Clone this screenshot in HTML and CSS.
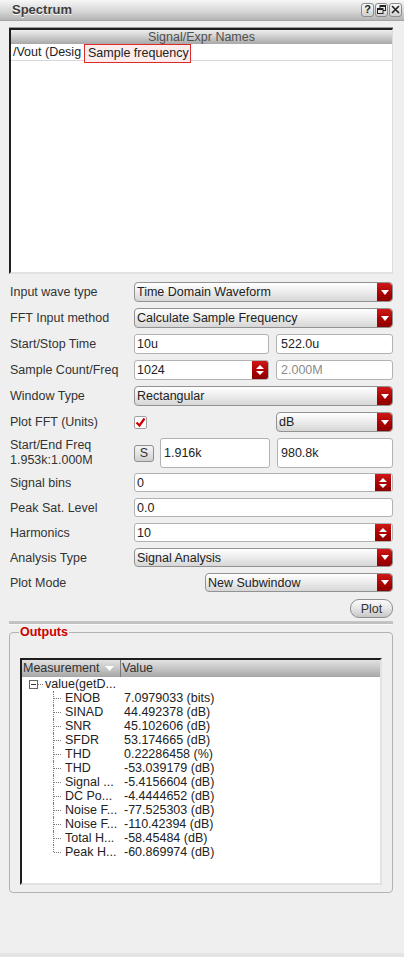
FILE: index.html
```html
<!DOCTYPE html>
<html>
<head>
<meta charset="utf-8">
<link rel="stylesheet" href="styles.css">
</head>
<body>
<div class="window">
  <div class="titlebar">
    <span class="title">Spectrum</span>
    <div class="tbtns">
      <span class="tbtn q">?</span>
      <span class="tbtn"><svg width="9" height="9" viewBox="0 0 9 9"><rect x="3" y="0.5" width="5.5" height="5" fill="none" stroke="#222" stroke-width="1"/><rect x="3" y="0.5" width="5.5" height="1.5" fill="#222"/><rect x="0.5" y="3.5" width="5.5" height="5" fill="#e8e8e8" stroke="#222" stroke-width="1"/><rect x="0.5" y="3.5" width="5.5" height="1.5" fill="#222"/></svg></span>
      <span class="tbtn"><svg width="9" height="9" viewBox="0 0 9 9"><path d="M1 1 L8 8 M8 1 L1 8" stroke="#222" stroke-width="1.6"/></svg></span>
    </div>
  </div>

  <div class="siglist">
    <div class="sighead">Signal/Expr Names</div>
    <div class="sigrow"><span class="sigtext">/Vout (Desig</span></div>
    <div class="tooltip">Sample frequency</div>
  </div>

  <div class="form">
    <div class="row">
      <span class="label">Input wave type</span>
      <div class="combo"><span>Time Domain Waveform</span><span class="arrow"><svg width="8" height="5" viewBox="0 0 8 5"><path d="M0 0 H8 L4 5 Z" fill="#fff"/></svg></span></div>
    </div>
    <div class="row">
      <span class="label">FFT Input method</span>
      <div class="combo"><span>Calculate Sample Frequency</span><span class="arrow"><svg width="8" height="5" viewBox="0 0 8 5"><path d="M0 0 H8 L4 5 Z" fill="#fff"/></svg></span></div>
    </div>
    <div class="row">
      <span class="label">Start/Stop Time</span>
      <div class="pair">
        <div class="field">10u</div>
        <div class="field">522.0u</div>
      </div>
    </div>
    <div class="row">
      <span class="label">Sample Count/Freq</span>
      <div class="pair">
        <div class="field spin"><span>1024</span><span class="spinbtn"><svg width="8" height="12" viewBox="0 0 8 12"><path d="M0 5 H8 L4 1 Z M0 7 H8 L4 11 Z" fill="#fff"/></svg></span></div>
        <div class="field disabled">2.000M</div>
      </div>
    </div>
    <div class="row">
      <span class="label">Window Type</span>
      <div class="combo"><span>Rectangular</span><span class="arrow"><svg width="8" height="5" viewBox="0 0 8 5"><path d="M0 0 H8 L4 5 Z" fill="#fff"/></svg></span></div>
    </div>
    <div class="row">
      <span class="label">Plot FFT (Units)</span>
      <div class="pair">
        <div class="checkcell"><span class="check"><svg width="11" height="11" viewBox="0 0 11 11"><path d="M1.5 5.5 L4.5 8.5 L9.5 1.5" fill="none" stroke="#d00000" stroke-width="2.2"/></svg></span></div>
        <div class="combo"><span>dB</span><span class="arrow"><svg width="8" height="5" viewBox="0 0 8 5"><path d="M0 0 H8 L4 5 Z" fill="#fff"/></svg></span></div>
      </div>
    </div>
    <div class="row tall">
      <span class="label two">Start/End Freq<br>1.953k:1.000M</span>
      <div class="freq">
        <span class="sbtn">S</span>
        <div class="field">1.916k</div>
        <div class="field">980.8k</div>
      </div>
    </div>
    <div class="row short">
      <span class="label">Signal bins</span>
      <div class="field spin"><span>0</span><span class="spinbtn"><svg width="8" height="12" viewBox="0 0 8 12"><path d="M0 5 H8 L4 1 Z M0 7 H8 L4 11 Z" fill="#fff"/></svg></span></div>
    </div>
    <div class="row short">
      <span class="label">Peak Sat. Level</span>
      <div class="field">0.0</div>
    </div>
    <div class="row short">
      <span class="label">Harmonics</span>
      <div class="field spin"><span>10</span><span class="spinbtn"><svg width="8" height="12" viewBox="0 0 8 12"><path d="M0 5 H8 L4 1 Z M0 7 H8 L4 11 Z" fill="#fff"/></svg></span></div>
    </div>
    <div class="row short">
      <span class="label">Analysis Type</span>
      <div class="combo"><span>Signal Analysis</span><span class="arrow"><svg width="8" height="5" viewBox="0 0 8 5"><path d="M0 0 H8 L4 5 Z" fill="#fff"/></svg></span></div>
    </div>
    <div class="row short">
      <span class="label">Plot Mode</span>
      <div class="combo mode"><span>New Subwindow</span><span class="arrow"><svg width="8" height="5" viewBox="0 0 8 5"><path d="M0 0 H8 L4 5 Z" fill="#fff"/></svg></span></div>
    </div>
    <div class="plotrow"><span class="plotbtn">Plot</span></div>
  </div>

  <div class="separator"></div>

  <fieldset class="outputs">
    <legend>Outputs</legend>
    <div class="table">
      <div class="thead">
        <div class="th first"><span>Measurement</span><svg width="9" height="5" viewBox="0 0 9 5"><path d="M0 0 H9 L4.5 5 Z" fill="#fff"/></svg></div>
        <div class="th">Value</div>
      </div>
      <div class="tree">
        <div class="parent"><span class="toggle"></span><span class="hdots"></span><span>value(getD...</span></div>
        <div class="children">
          <div class="leaf"><span>ENOB</span><span>7.0979033 (bits)</span></div>
          <div class="leaf"><span>SINAD</span><span>44.492378 (dB)</span></div>
          <div class="leaf"><span>SNR</span><span>45.102606 (dB)</span></div>
          <div class="leaf"><span>SFDR</span><span>53.174665 (dB)</span></div>
          <div class="leaf"><span>THD</span><span>0.22286458 (%)</span></div>
          <div class="leaf"><span>THD</span><span>-53.039179 (dB)</span></div>
          <div class="leaf"><span>Signal ...</span><span>-5.4156604 (dB)</span></div>
          <div class="leaf"><span>DC Po...</span><span>-4.4444652 (dB)</span></div>
          <div class="leaf"><span>Noise F...</span><span>-77.525303 (dB)</span></div>
          <div class="leaf"><span>Noise F...</span><span>-110.42394 (dB)</span></div>
          <div class="leaf"><span>Total H...</span><span>-58.45484 (dB)</span></div>
          <div class="leaf"><span>Peak H...</span><span>-60.869974 (dB)</span></div>
        </div>
      </div>
    </div>
  </fieldset>
</div>
</body>
</html>
```
FILE: styles.css
```css
* { box-sizing: border-box; }
html, body { margin: 0; padding: 0; }
body {
  width: 404px;
  height: 957px;
  overflow: hidden;
  background: #e4e4e4;
  font-family: "Liberation Sans", Arial, sans-serif;
  font-size: 12.5px;
  color: #2b2b2b;
}
.window {
  height: 953px;
  background: #efefef;
}

/* title bar */
.titlebar {
  height: 21px;
  display: flex;
  align-items: center;
  justify-content: space-between;
  padding: 0 2px 1px 12px;
  background: linear-gradient(#f7f7f7, #d4d4d4 60%, #b4b4b4);
  border-bottom: 1px solid #a4a4a4;
}
.title {
  font-weight: bold;
  font-size: 13px;
  color: #3c3c3c;
  text-shadow: 0 1px 0 #ffffff;
}
.tbtns { display: flex; gap: 1px; }
.tbtn {
  width: 13px;
  height: 14px;
  display: flex;
  align-items: center;
  justify-content: center;
  border: 1px solid #8c8c8c;
  border-radius: 3px;
  background: linear-gradient(#fafafa, #cfcfcf);
  font-size: 11px;
  font-weight: bold;
  color: #222;
  line-height: 1;
}

/* signal list */
.siglist {
  position: relative;
  margin: 7px 11px 0 9px;
  height: 246px;
  background: #fff;
  border-top: 2px solid #1e1e1e;
  border-left: 2px solid #1e1e1e;
  border-right: 1px solid #dcdcdc;
  border-bottom: 2px solid #e2e2e2;
  box-shadow: 0 -1px 0 #9a9a9a;
}
.sighead {
  height: 14px;
  line-height: 14px;
  text-align: center;
  color: #505050;
  background: linear-gradient(#eeeeee, #c6c6c6 60%, #a8a8a8);
}
.sigrow {
  height: 17px;
  line-height: 16px;
  padding-left: 2px;
  border-bottom: 1px solid #d8d8d8;
  color: #222;
  white-space: nowrap;
}
.tooltip {
  position: absolute;
  left: 73px;
  top: 14px;
  width: 107px;
  height: 19px;
  line-height: 17px;
  padding-left: 3px;
  border: 1px solid #dd2a2a;
  background: #fcecec;
  color: #222;
  white-space: nowrap;
}

/* form */
.form {
  margin-top: 8px;
  padding: 0 11px 0 9px;
  display: flex;
  flex-direction: column;
  gap: 6px;
}
.row {
  display: grid;
  grid-template-columns: 125px 259px;
  align-items: center;
  height: 20px;
}
.row.short { height: 19px; }
.row.tall { height: 29px; }
.label {
  padding-left: 1px;
  color: #333;
  white-space: nowrap;
}
.label.two { line-height: 15px; }

.combo {
  height: 100%;
  display: flex;
  align-items: center;
  border: 1px solid #929292;
  border-radius: 4px;
  background: linear-gradient(#ffffff, #f0f0f0 40%, #d6d6d6);
  padding-left: 2px;
  overflow: hidden;
  color: #222;
  white-space: nowrap;
}
.combo.mode { margin-left: 71px; }
.arrow, .spinbtn {
  margin-left: auto;
  flex: none;
  width: 15px;
  height: 100%;
  display: flex;
  align-items: center;
  justify-content: center;
  background: linear-gradient(#d01818, #a80000 60%, #8c0000);
  border-radius: 0 3px 3px 0;
}
.spinbtn { border-radius: 0; width: 16px; }

.pair {
  display: grid;
  grid-template-columns: 135px 117px;
  column-gap: 7px;
  height: 100%;
}
.field {
  height: 100%;
  display: flex;
  align-items: center;
  padding-left: 2px;
  background: #fff;
  border: 1px solid #b2b2b2;
  border-radius: 3px;
  color: #222;
  overflow: hidden;
  white-space: nowrap;
}
.pair .field:last-child { padding-left: 4px; }
.field.disabled { color: #8a8a8a; }
.field.spin { padding-right: 1px; }
.pair .field.spin { padding-right: 0; }

.checkcell { display: flex; align-items: center; }
.check {
  width: 13px;
  height: 13px;
  display: flex;
  align-items: center;
  justify-content: center;
  background: #fff;
  border: 1px solid #a0a0a0;
  border-radius: 2px;
}

.freq {
  display: grid;
  grid-template-columns: 20px 110px 117px;
  column-gap: 6px;
  align-items: center;
  height: 100%;
}
.freq .field { padding-left: 3px; }
.freq .field:last-child { margin-left: 1px; }
.sbtn {
  height: 17px;
  display: flex;
  align-items: center;
  justify-content: center;
  border: 1px solid #8e8e8e;
  border-radius: 3px;
  background: linear-gradient(#f6f6f6, #d0d0d0);
  color: #333;
}

.plotrow {
  display: flex;
  justify-content: flex-end;
  margin-top: 1px;
}
.plotbtn {
  width: 43px;
  height: 19px;
  display: flex;
  align-items: center;
  justify-content: center;
  border: 1px solid #8e8e8e;
  border-radius: 9px;
  background: linear-gradient(#fbfbfb, #e6e6e6 50%, #c8c8c8);
  color: #333;
}

.separator {
  margin: 3px 11px 0 9px;
  height: 4px;
  border-top: 1px solid #c6c6c6;
  background: #c0c0c0;
  border-bottom: 1px solid #f8f8f8;
}

/* outputs */
.outputs {
  margin: 0 11px 0 9px;
  padding: 0 10px 7px 10px;
  border: 1px solid #b2b2b2;
  border-radius: 4px;
  min-width: 0;
}
.outputs legend {
  padding: 0 1px;
  margin-left: -1px;
  line-height: 14px;
  font-weight: bold;
  color: #cc0000;
}
.table {
  margin-top: 19px;
  height: 227px;
  background: #fff;
  border-top: 2px solid #1e1e1e;
  border-left: 2px solid #1e1e1e;
  border-right: 2px solid #e2e2e2;
  border-bottom: 2px solid #e2e2e2;
}
.thead {
  height: 17px;
  display: grid;
  grid-template-columns: 99px 1fr;
  background: linear-gradient(#e2e2e2, #c0c0c0 60%, #a6a6a6);
  line-height: 17px;
  color: #303030;
}
.th { padding-left: 1px; }
.th.first {
  display: flex;
  align-items: center;
  justify-content: space-between;
  padding-right: 6px;
  border-right: 1px solid #7a7a7a;
}
.tree { color: #222; }
.parent {
  height: 14px;
  display: flex;
  align-items: center;
  padding-left: 7px;
  line-height: 14px;
}
.toggle {
  position: relative;
  flex: none;
  width: 9px;
  height: 9px;
  border: 1px solid #666;
  background: #fff;
}
.toggle::after {
  content: "";
  position: absolute;
  left: 1px;
  right: 1px;
  top: 3px;
  border-top: 1px solid #333;
}
.hdots {
  width: 5px;
  margin-right: 2px;
  border-top: 1px dotted #777;
}
.leaf {
  position: relative;
  height: 14px;
  line-height: 14px;
  display: grid;
  grid-template-columns: 59px 1fr;
  padding-left: 43px;
  white-space: nowrap;
}
.leaf::before {
  content: "";
  position: absolute;
  left: 31px;
  top: 0;
  bottom: 0;
  border-left: 1px dotted #777;
}
.leaf:last-child::before { bottom: 7px; }
.leaf::after {
  content: "";
  position: absolute;
  left: 32px;
  top: 7px;
  width: 7px;
  border-top: 1px dotted #777;
}
```
